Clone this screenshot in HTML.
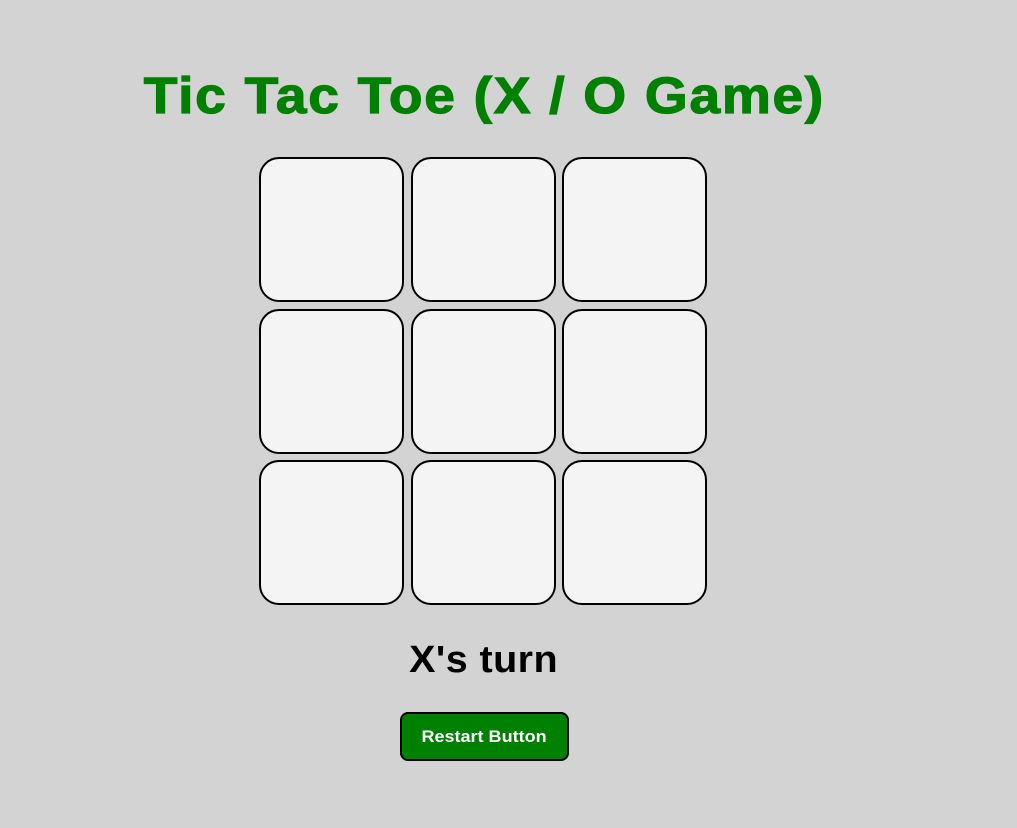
<!DOCTYPE html>
<html><head><style>
html,body{margin:0;padding:0;background:#d3d3d3;width:1017px;height:828px;overflow:hidden;font-family:"Liberation Sans",Arial,sans-serif}
.w{position:absolute;left:0;width:968px;text-align:center;white-space:nowrap}
.w span{display:inline-block}
h1{margin:0;top:66px;color:#008000;font-size:51px;font-weight:bold;line-height:60px}
h1 span{transform:scaleX(1.08);letter-spacing:1.6px;-webkit-text-stroke:1.2px #008000}
.c{position:absolute;width:141px;height:141px;border:2px solid #000;border-radius:20px;background:#f4f4f4;box-sizing:content-box}
.t{top:637px;font-size:38px;font-weight:bold;line-height:46px;color:#000}
.t span{transform:scaleX(1.04);letter-spacing:0.4px}
.b{position:absolute;left:400px;top:712px;width:165px;height:45px;box-sizing:content-box;background:#008000;border:2px solid #000;border-radius:8px;color:#fff;font-weight:bold;font-size:17px;line-height:45px;text-align:center}
.b span{display:inline-block;transform:scaleX(1.06)}
</style></head><body>
<h1 class="w"><span>Tic Tac Toe (X / O Game)</span></h1>
<div class="c" style="left:259px;top:157px"></div>
<div class="c" style="left:411px;top:157px"></div>
<div class="c" style="left:562px;top:157px"></div>
<div class="c" style="left:259px;top:309px"></div>
<div class="c" style="left:411px;top:309px"></div>
<div class="c" style="left:562px;top:309px"></div>
<div class="c" style="left:259px;top:460px"></div>
<div class="c" style="left:411px;top:460px"></div>
<div class="c" style="left:562px;top:460px"></div>
<div class="w t"><span>X's turn</span></div>
<div class="b"><span>Restart Button</span></div>
</body></html>
